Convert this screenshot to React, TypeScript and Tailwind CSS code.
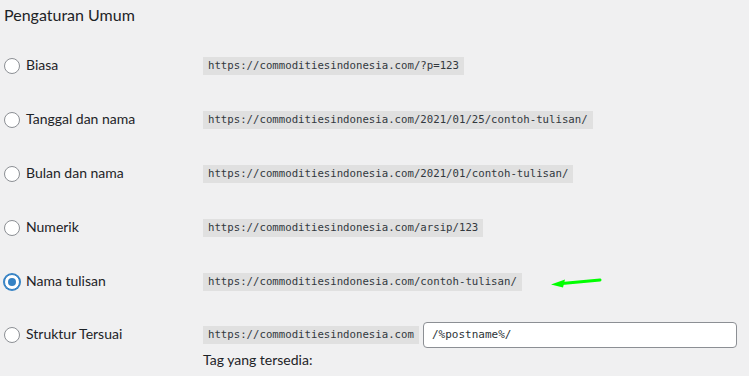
import React from 'react';

const rows = [
    { label: 'Biasa', url: 'https://commoditiesindonesia.com/?p=123' },
    { label: 'Tanggal dan nama', url: 'https://commoditiesindonesia.com/2021/01/25/contoh-tulisan/' },
    { label: 'Bulan dan nama', url: 'https://commoditiesindonesia.com/2021/01/contoh-tulisan/' },
    { label: 'Numerik', url: 'https://commoditiesindonesia.com/arsip/123' },
    { label: 'Nama tulisan', url: 'https://commoditiesindonesia.com/contoh-tulisan/', checked: true },
];

const Radio: React.FC<{ checked?: boolean }> = ({ checked }) => (
    <span
        className={
            'flex h-4 w-4 shrink-0 items-center justify-center rounded-full border bg-white ' +
            (checked ? 'border-[#3582c4] shadow-[0_0_0_1px_#3582c4]' : 'border-[#8c8f94]')
        }
    >
        {checked && <span className="h-2 w-2 rounded-full bg-[#3582c4]" />}
    </span>
);

const Code: React.FC<{ children: React.ReactNode }> = ({ children }) => (
    <code className="bg-[#e0e0e0] px-[5px] pt-[2px] pb-[2px] font-['DejaVu_Sans_Mono',monospace] text-[10.7px] leading-[14px] text-[#32383e]">
        {children}
    </code>
);

export default function App() {
    return (
        <div className="min-h-[376px] w-[749px] bg-[#f0f0f1] pl-1 font-['Lato',sans-serif] text-[#1d2327]">
            <h2 className="h-[39px] pt-[3px] text-[16px] leading-[24px] font-normal">Pengaturan Umum</h2>
            {rows.map(row => (
                <div key={row.label} className="flex h-[54px] items-center">
                    <label className="flex w-[199px] items-center gap-[6px] text-[14px] leading-[18px]">
                        <Radio checked={row.checked} />
                        <span className="-mt-[2px]">{row.label}</span>
                    </label>
                    <Code>{row.url}</Code>
                    {row.checked && (
                        <svg width="52" height="12" viewBox="0 0 52 12" className="ml-[28px] mt-[2px]">
                            <path d="M50 3 L12 6.5" stroke="#00ff00" strokeWidth="3" strokeLinecap="round" />
                            <path d="M1 7.5 L15 2.5 L13 10.5 Z" fill="#00ff00" />
                        </svg>
                    )}
                </div>
            ))}
            <div className="flex pt-[13px]">
                <label className="flex h-[26px] w-[199px] items-center gap-[6px] text-[14px] leading-[18px]">
                    <Radio />
                    <span className="-mt-[2px]">Struktur Tersuai</span>
                </label>
                <div className="flex flex-col">
                    <div className="flex items-center gap-[4px]">
                        <Code>https://commoditiesindonesia.com</Code>
                        <div className="flex h-[26px] w-[314px] items-center rounded border border-[#8c8f94] bg-white px-2 font-['DejaVu_Sans_Mono',monospace] text-[11px] text-[#2c3338]">
                            /%postname%/
                        </div>
                    </div>
                    <p className="mt-[2px] text-[14px] leading-[20px]">Tag yang tersedia:</p>
                </div>
            </div>
        </div>
    );
}
